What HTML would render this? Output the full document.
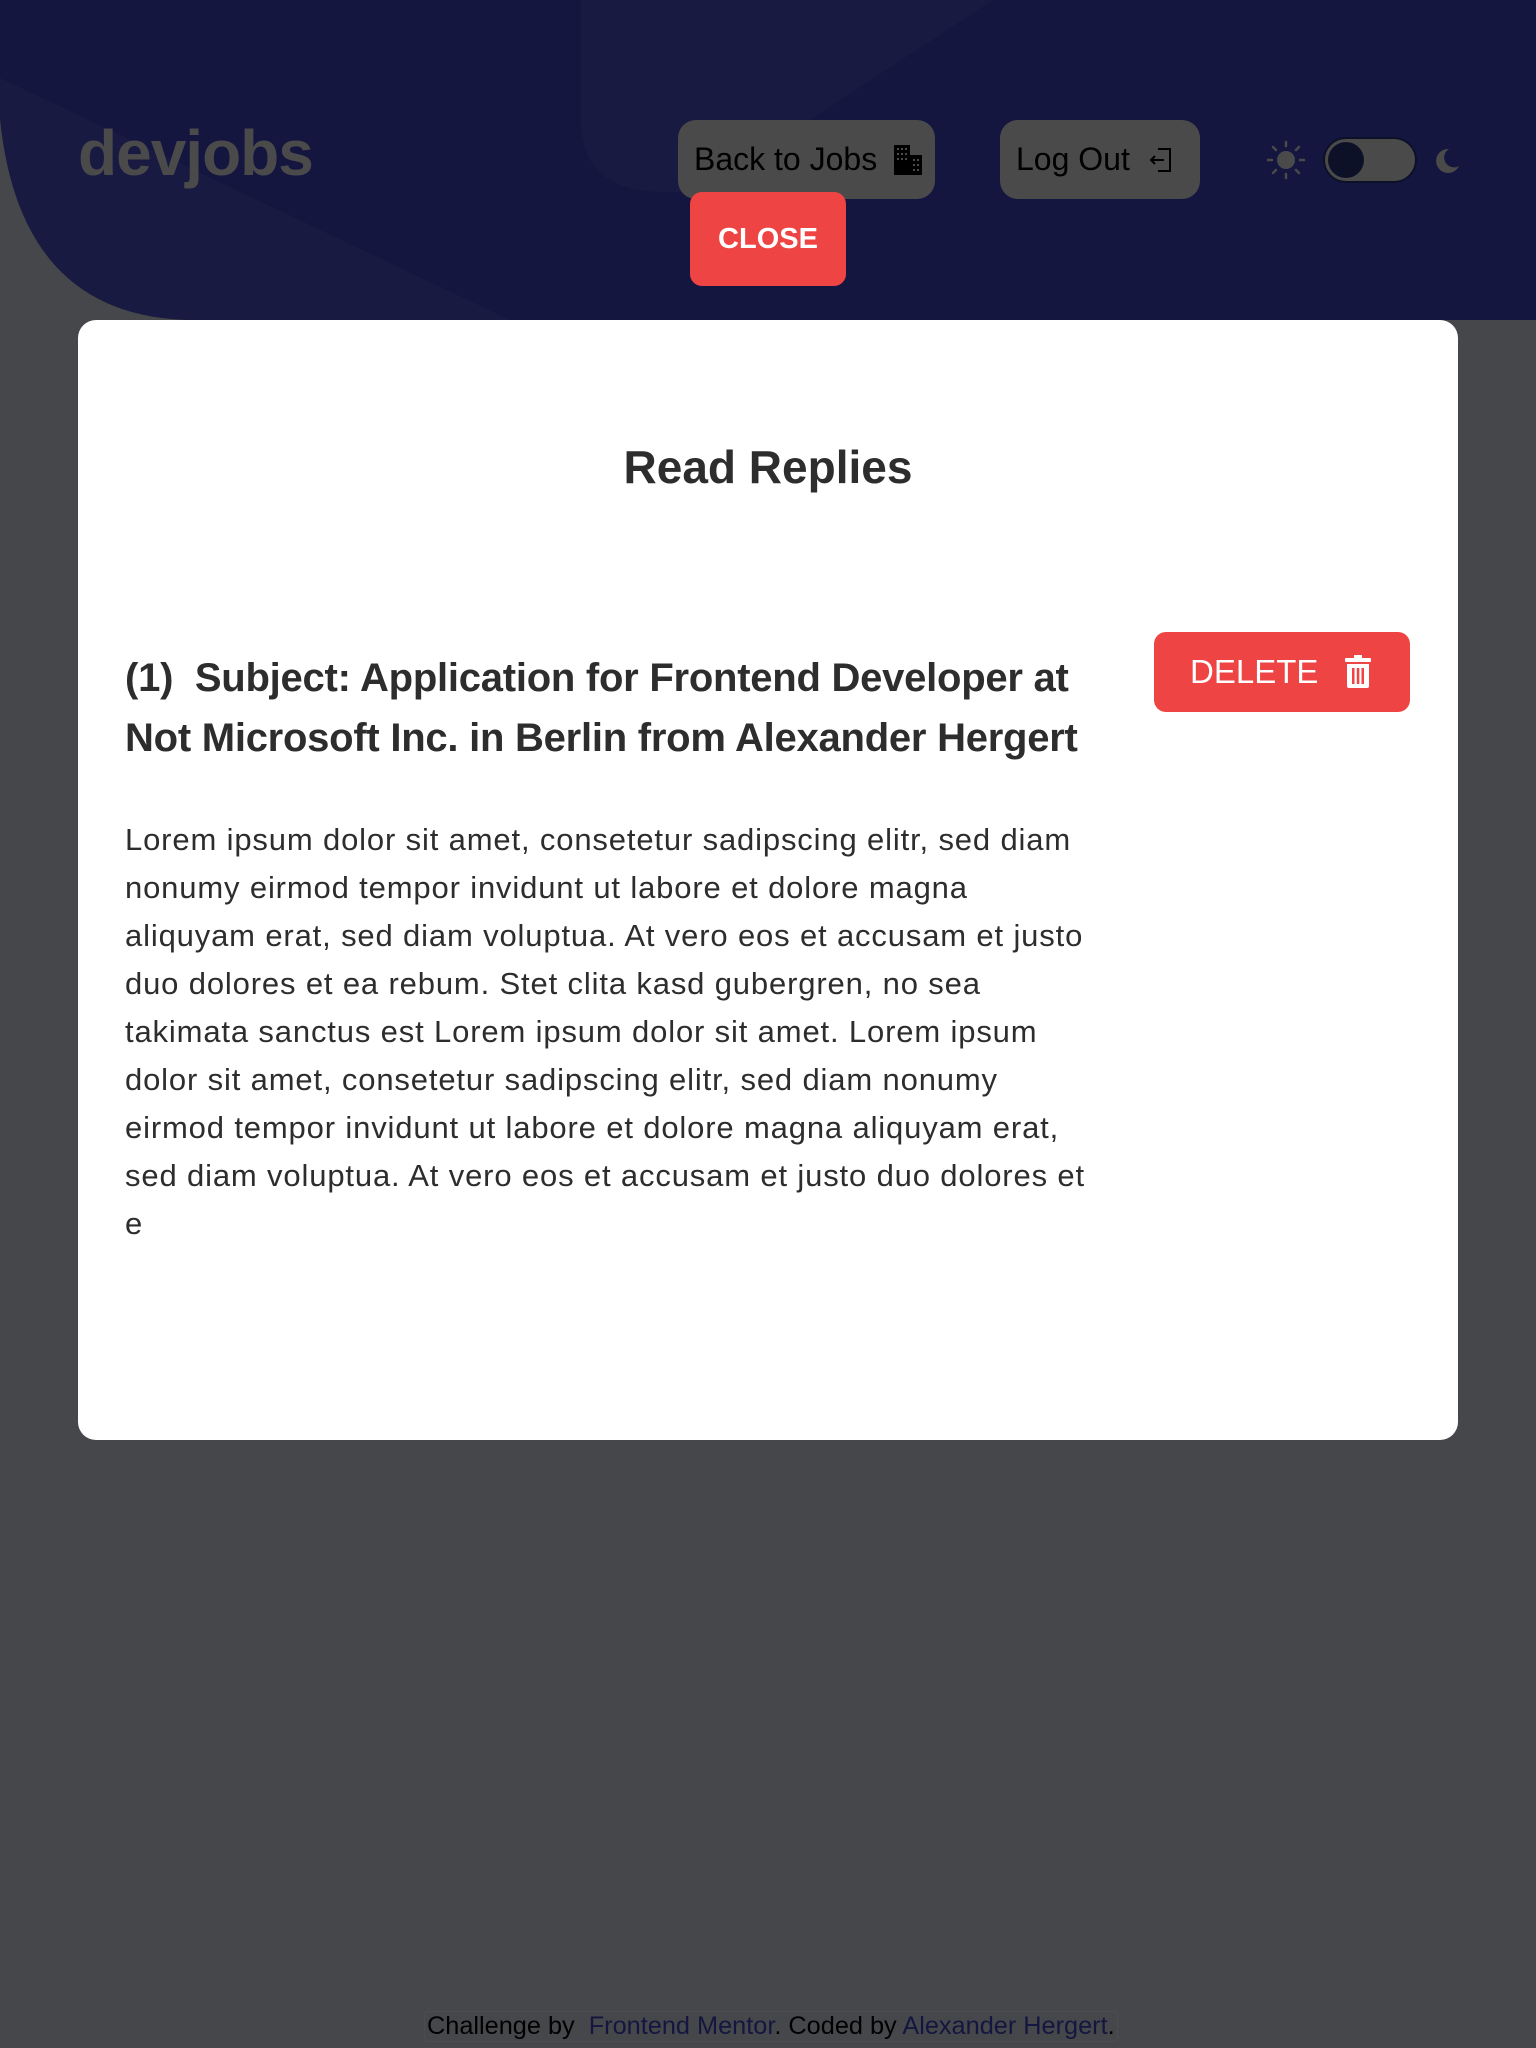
<!DOCTYPE html>
<html><head><meta charset="utf-8">
<style>
*{margin:0;padding:0;box-sizing:border-box}
body{width:1536px;height:2048px;background:#46474a;position:relative;overflow:hidden;font-family:"Liberation Sans",sans-serif}
.logo{position:absolute;left:78px;top:116px;font-size:64px;font-weight:bold;color:#4a4a4a;letter-spacing:-1px}
.btn{position:absolute;background:#4a4a4a;border-radius:18px;color:#000;font-size:32px;display:flex;align-items:center}
.close{position:absolute;left:690px;top:192px;width:156px;height:94px;background:#ef4444;border-radius:12px;color:#fff;font-weight:bold;font-size:29px;display:flex;align-items:center;justify-content:center}
.modal{position:absolute;left:78px;top:320px;width:1380px;height:1120px;background:#fff;border-radius:18px}
h1{position:absolute;left:0;width:100%;top:120px;text-align:center;font-size:46px;color:#2d2d2d}
.sub{position:absolute;left:47px;top:328px;font-size:40px;font-weight:bold;color:#2d2d2d;line-height:60px;white-space:nowrap;letter-spacing:-0.25px}
.txt{position:absolute;left:47px;top:496px;font-size:31px;color:#2d2d2d;line-height:48px;white-space:nowrap;letter-spacing:0.85px}
.del{position:absolute;left:1076px;top:312px;width:256px;height:80px;background:#ef4444;border-radius:12px;color:#fff;font-size:33px;display:flex;align-items:center;padding-left:36px}
.foot{position:absolute;left:424px;top:2011px;font-size:25.3px;color:#000;white-space:nowrap;border:1px solid #4c4d50;border-radius:4px;padding:0 2px}
.foot span{color:#14163f}
</style></head><body>
<svg style="position:absolute;left:0;top:0" width="1536" height="320" viewBox="0 0 1536 320">
<defs><clipPath id="h"><path d="M0,0H1536V320H196Q20,320 0,118Z"/></clipPath></defs>
<g clip-path="url(#h)">
<rect width="1536" height="320" fill="#141640"/>
<path d="M0,78 L510,320 L0,320Z" fill="#181a42"/>
<path d="M581,0 L581,120 Q581,190 660,192 L700,192 L993,0Z" fill="#181a42"/>
</g></svg>
<div class="logo">devjobs</div>
<div class="btn" style="left:678px;top:120px;width:257px;height:79px;padding-left:16px">Back to Jobs
<svg width="30" height="30" viewBox="0 0 30 30" style="margin-left:16px"><rect x="1" y="0" width="16" height="30" fill="#000"/><rect x="17" y="10" width="12" height="20" fill="#000"/><g fill="#4a4a4a"><rect x="4" y="3" width="2" height="2"/><rect x="8" y="3" width="2" height="2"/><rect x="12" y="3" width="2" height="2"/><rect x="4" y="8" width="2" height="2"/><rect x="8" y="8" width="2" height="2"/><rect x="12" y="8" width="2" height="2"/><rect x="4" y="13" width="2" height="2"/><rect x="8" y="13" width="2" height="2"/><rect x="12" y="13" width="2" height="2"/><rect x="20" y="14" width="2" height="2"/><rect x="24" y="14" width="2" height="2"/><rect x="20" y="19" width="2" height="2"/><rect x="24" y="19" width="2" height="2"/><rect x="20" y="24" width="2" height="2"/><rect x="24" y="24" width="2" height="2"/></g></svg></div>
<div class="btn" style="left:1000px;top:120px;width:200px;height:79px;padding-left:16px">Log Out
<svg width="24" height="26" viewBox="0 0 24 26" style="margin-left:18px" fill="none" stroke="#000" stroke-width="2"><path d="M10 2h12v22H10M16 13H3M7 9l-4 4 4 4"/></svg></div>
<div class="close">CLOSE</div>
<svg style="position:absolute;left:1266px;top:140px" width="40" height="40" viewBox="0 0 40 40"><circle cx="20" cy="20" r="9" fill="#4a4a4a"/><g stroke="#4a4a4a" stroke-width="2.5" stroke-linecap="round"><path d="M20 2v4M20 34v4M2 20h4M34 20h4M7 7l3 3M30 30l3 3M7 33l3-3M30 10l3-3"/></g></svg>
<div style="position:absolute;left:1323px;top:137px;width:94px;height:46px;background:#4a4a4a;border:2px solid #0d1128;border-radius:23px"><div style="position:absolute;left:3px;top:3px;width:36px;height:36px;border-radius:50%;background:#0d1128"></div></div>
<svg style="position:absolute;left:1432px;top:146px" width="30" height="30" viewBox="0 0 30 30"><path d="M17 3A12 12 0 1 0 27 20 9 9 0 1 1 17 3z" fill="#4a4a4a"/></svg>
<div class="modal">
<h1>Read Replies</h1>
<div class="sub">(1)&nbsp; Subject: Application for Frontend Developer at<br>Not Microsoft Inc. in Berlin from Alexander Hergert</div>
<div class="del">DELETE
<svg width="28" height="34" viewBox="0 0 28 34" style="margin-left:26px"><rect x="1" y="3" width="26" height="4" rx="1" fill="#fff"/><rect x="10" y="0" width="8" height="4" fill="#fff"/><path d="M3 9h22v22a2 2 0 0 1-2 2H5a2 2 0 0 1-2-2z" fill="#fff"/><g fill="#ef4444"><rect x="8" y="13" width="2.5" height="16"/><rect x="12.8" y="13" width="2.5" height="16"/><rect x="17.5" y="13" width="2.5" height="16"/></g></svg></div>
<div class="txt">Lorem ipsum dolor sit amet, consetetur sadipscing elitr, sed diam<br>nonumy eirmod tempor invidunt ut labore et dolore magna<br>aliquyam erat, sed diam voluptua. At vero eos et accusam et justo<br>duo dolores et ea rebum. Stet clita kasd gubergren, no sea<br>takimata sanctus est Lorem ipsum dolor sit amet. Lorem ipsum<br>dolor sit amet, consetetur sadipscing elitr, sed diam nonumy<br>eirmod tempor invidunt ut labore et dolore magna aliquyam erat,<br>sed diam voluptua. At vero eos et accusam et justo duo dolores et<br>e</div>
</div>
<div class="foot">Challenge by&nbsp; <span>Frontend Mentor</span>. Coded by <span>Alexander Hergert</span>.</div>
</body></html>
